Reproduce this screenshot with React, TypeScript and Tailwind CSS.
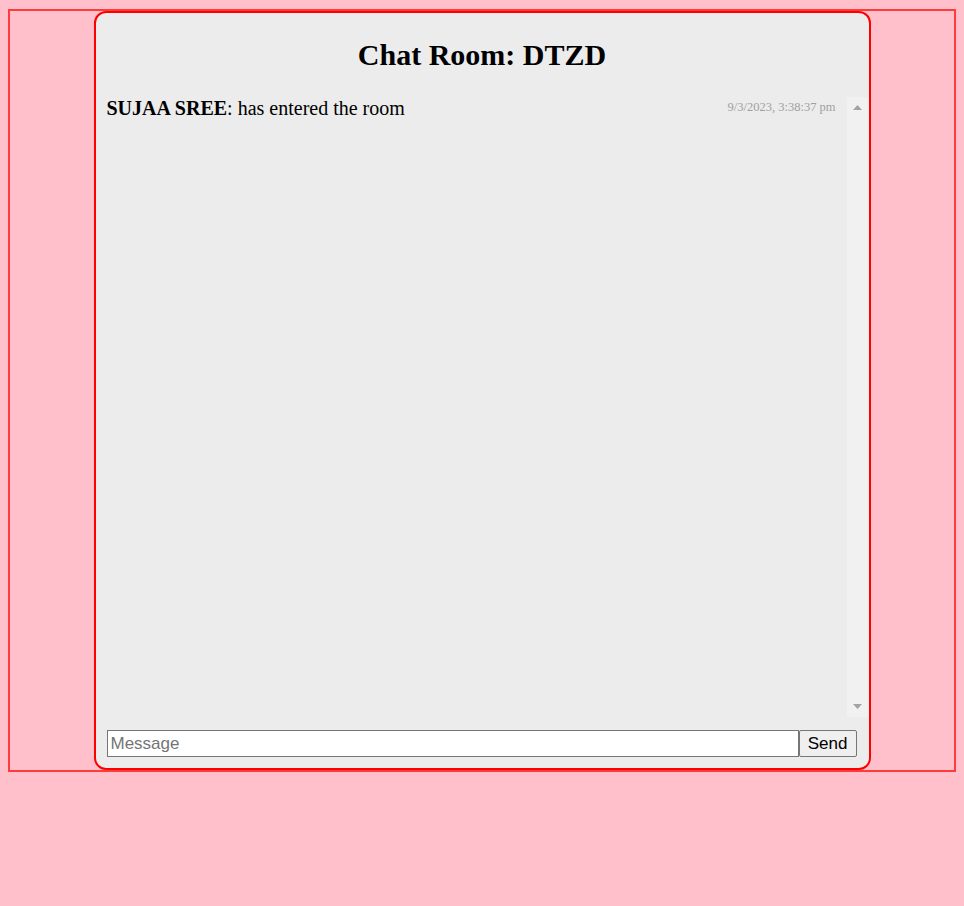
import React, { useState } from "react";

type Message = { user: string; text: string; time: string };

const serif = "font-['Liberation_Serif','Times_New_Roman',serif]";
const sans = "font-['Liberation_Sans',Arial,sans-serif]";

export default function App() {
  const [messages] = useState<Message[]>([
    { user: "SUJAA SREE", text: "has entered the room", time: "9/3/2023, 3:38:37 pm" },
  ]);
  const [draft, setDraft] = useState("");

  return (
    <div className={`min-h-[906px] bg-[#ffc0cb] px-2 pt-[9px] ${serif}`}>
      <div className="h-[763px] border-2 border-[#ff3b3b]">
        <div className="mx-auto flex h-[759px] w-[777px] flex-col rounded-[12px] border-2 border-[#ff0000] bg-[#ececec]">
          {/* Title */}
          <div className="flex h-[84px] items-center justify-center">
            <h1 className="text-[30px] font-bold leading-none text-black">Chat Room: DTZD</h1>
          </div>

          {/* Messages + fake scrollbar */}
          <div className="flex h-[620px]">
            <div className="flex-1 px-[11px]">
              {messages.map((m, i) => (
                <div key={i} className="flex items-start justify-between">
                  <p className="text-[20px] leading-[22px] text-black">
                    <strong>{m.user}</strong>: {m.text}
                  </p>
                  <span className="pt-[3px] text-[12.5px] leading-[14px] text-[#a0a0a0]">{m.time}</span>
                </div>
              ))}
            </div>
            <div className="flex w-[22px] flex-col items-center justify-between bg-[#f1f1f1] py-[8px]">
              <svg width="9" height="5" viewBox="0 0 9 5">
                <polygon points="0,5 4.5,0 9,5" fill="#a3a3a3" />
              </svg>
              <svg width="9" height="5" viewBox="0 0 9 5">
                <polygon points="0,0 9,0 4.5,5" fill="#a3a3a3" />
              </svg>
            </div>
          </div>

          {/* Input */}
          <form
            className={`mt-[13px] flex px-[11px] ${sans}`}
            onSubmit={(e) => {
              e.preventDefault();
              setDraft("");
            }}
          >
            <input
              value={draft}
              onChange={(e) => setDraft(e.target.value)}
              placeholder="Message"
              className="h-[27px] w-[692px] border border-[#767676] bg-white px-[3px] text-[17px] text-black placeholder:text-[#757575] focus:outline-none"
            />
            <button
              type="submit"
              className="h-[27px] w-[58px] rounded-[2px] border border-[#767676] bg-[#efefef] text-[17px] text-black"
            >
              Send
            </button>
          </form>
        </div>
      </div>
    </div>
  );
}
